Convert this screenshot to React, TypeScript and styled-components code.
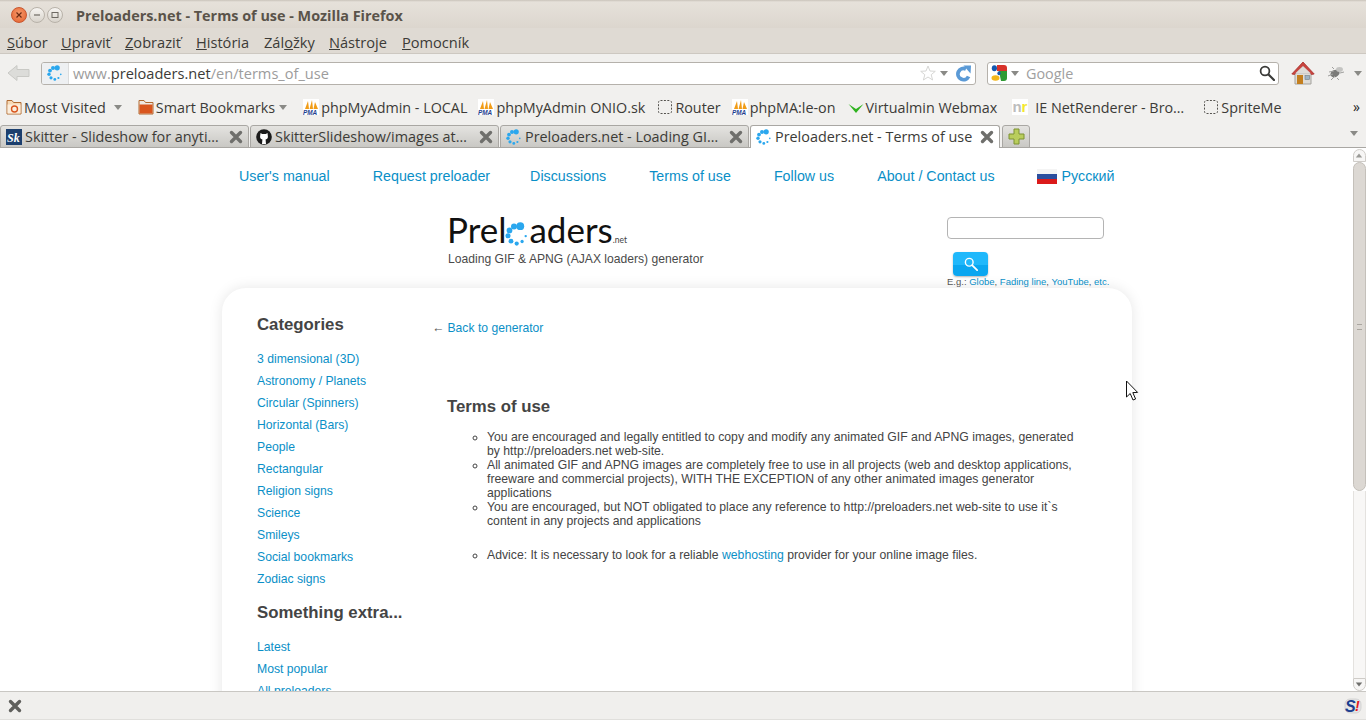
import React from 'react';
import styled, { createGlobalStyle } from 'styled-components';

const UI_FONT = '"Open Sans", "Noto Sans", sans-serif';
const PAGE_FONT = '"Liberation Sans", Arial, sans-serif';

const GlobalStyle = createGlobalStyle`
  html, body {
    margin: 0;
    padding: 0;
    overflow: hidden;
    background: #fff;
  }
  * {
    box-sizing: border-box;
  }
`;

const Window = styled.div`
  position: relative;
  display: flex;
  flex-direction: column;
  width: 1366px;
  height: 720px;
  overflow: hidden;
  font-family: ${UI_FONT};
`;

const TitleBar = styled.div`
  display: flex;
  align-items: center;
  height: 28px;
  padding: 2px 0 0 11px;
  background: linear-gradient(#c9c3ba 0, #e6e1da 2px, #dcd6ce 100%);
`;

const WindowButtons = styled.div`
  display: flex;
  gap: 2px;
  width: 65px;
`;

const WindowButton = styled.div<{ $close?: boolean }>`
  display: flex;
  align-items: center;
  justify-content: center;
  width: 16px;
  height: 16px;
  border-radius: 50%;
  border: 1px solid ${({ $close }) => ($close ? '#c9562f' : '#b8b2a9')};
  background: ${({ $close }) =>
    $close
      ? 'radial-gradient(circle at 50% 40%, #f79a6c, #e2602c)'
      : 'linear-gradient(#f7f5f2, #d8d3cb)'};
`;

const WindowTitle = styled.div`
  font-size: 14.4px;
  font-weight: 700;
  color: #5a534a;
  white-space: nowrap;
`;

const MenuBar = styled.div`
  display: flex;
  align-items: center;
  height: 26px;
  padding: 2px 0 0 7px;
  background: #dfdad3;
  border-bottom: 1px solid #cdc8c1;
  font-size: 14.6px;
  color: #3c3b37;
`;

const MenuItem = styled.span<{ $width: number }>`
  width: ${({ $width }) => $width}px;
  white-space: nowrap;
`;

const NavBar = styled.div`
  display: flex;
  align-items: center;
  height: 38px;
  padding-left: 7px;
  background: #f1f0ee;
`;

const UrlBox = styled.div`
  display: flex;
  align-items: center;
  width: 935px;
  height: 23px;
  margin-left: 10px;
  background: #fff;
  border: 1px solid #b5b1ab;
  border-radius: 3px;
  overflow: hidden;
`;

const UrlIcon = styled.div`
  display: flex;
  align-items: center;
  justify-content: center;
  width: 27px;
  height: 100%;
  background: #eef0f2;
  border-right: 1px solid #dcdcdc;
`;

const UrlText = styled.div`
  flex: 1;
  padding-left: 4px;
  font-size: 14.6px;
  color: #9c9c9c;
  white-space: nowrap;
`;

const UrlHost = styled.span`
  color: #3c3b37;
`;

const UrlActions = styled.div`
  display: flex;
  align-items: center;
  gap: 4px;
  padding-right: 3px;
`;

const ReloadWrap = styled.div`
  display: flex;
  margin-left: 3px;
`;

const SearchBox = styled.div`
  display: flex;
  align-items: center;
  width: 292px;
  height: 23px;
  margin-left: 11px;
  padding: 0 3px;
  background: #fff;
  border: 1px solid #b5b1ab;
  border-radius: 3px;
`;

const SearchPlaceholder = styled.div`
  flex: 1;
  margin-left: 7px;
  font-size: 14.4px;
  color: #a0a0a0;
`;

const NavEnd = styled.div`
  display: flex;
  align-items: center;
  margin-left: 12px;
`;

const DropArrow = styled.span<{ $color?: string; $left?: number }>`
  display: inline-block;
  width: 0;
  height: 0;
  margin-left: ${({ $left }) => $left || 0}px;
  border-left: 4px solid transparent;
  border-right: 4px solid transparent;
  border-top: 5px solid ${({ $color }) => $color || '#8a8a86'};
`;

const BookmarksBar = styled.div`
  display: flex;
  align-items: center;
  height: 30px;
  padding-left: 6px;
  background: #f1f0ee;
  font-size: 14.35px;
  color: #3c3b37;
`;

const Bookmark = styled.div<{ $left: number; $gap?: number }>`
  display: flex;
  align-items: center;
  gap: ${({ $gap }) => $gap || 2}px;
  margin-left: ${({ $left }) => $left}px;
  white-space: nowrap;
`;

const Chevron = styled.span`
  margin-left: auto;
  padding-right: 6px;
  font-size: 14px;
  line-height: 14px;
  color: #222;
`;

const TabStrip = styled.div`
  display: flex;
  align-items: flex-end;
  height: 26px;
  padding-right: 6px;
  background: #f1f0ee;
  border-bottom: 1px solid #a9a7a3;
`;

const Tab = styled.div<{ $active?: boolean; $width: number }>`
  display: flex;
  align-items: center;
  gap: 3px;
  width: ${({ $width }) => $width}px;
  height: 23px;
  margin-right: 1px;
  margin-bottom: -1px;
  padding: 0 5px ${({ $active }) => ($active ? '1px' : '0')} 5px;
  border: 1px solid #a9a7a3;
  border-bottom: ${({ $active }) => ($active ? 'none' : '1px solid #a9a7a3')};
  border-radius: 3px 3px 0 0;
  background: ${({ $active }) =>
    $active ? '#fff' : 'linear-gradient(#e4e3e0, #c9c8c4)'};
  font-size: 14.4px;
  color: #3c3b37;
`;

const TabTitle = styled.span`
  flex: 1;
  white-space: nowrap;
  overflow: hidden;
`;

const NewTab = styled(Tab)`
  justify-content: center;
  padding: 0;
  margin-left: 1px;
`;

const TabListButton = styled.div`
  margin-left: auto;
  padding: 0 2px 6px 0;
`;

const Viewport = styled.div`
  flex: 1;
  display: flex;
  min-height: 0;
`;

const Page = styled.div`
  flex: 1;
  overflow: hidden;
  font-family: ${PAGE_FONT};
  background: #fff;
`;

const Scrollbar = styled.div`
  display: flex;
  flex-direction: column;
  align-items: center;
  width: 14px;
  padding-top: 1px;
  background: #fff;
`;

const ScrollButton = styled.div<{ $up?: boolean }>`
  display: flex;
  align-items: center;
  justify-content: center;
  width: 13px;
  height: 13px;
  background: #f7f6f5;
  border: 1px solid #cfccc8;
  border-radius: ${({ $up }) => ($up ? '7px 7px 0 0' : '0 0 7px 7px')};
`;

const ScrollArrow = styled(DropArrow)<{ $up?: boolean }>`
  transform: ${({ $up }) => ($up ? 'rotate(180deg) scale(.8)' : 'scale(.8)')};
`;

const ScrollThumb = styled.div`
  display: flex;
  align-items: center;
  justify-content: center;
  width: 13px;
  height: 329px;
  background: #dcd8d3;
  border: 1px solid #c4c0ba;
  border-radius: 7px;
`;

const ScrollTrack = styled.div`
  flex: 1;
  width: 13px;
  background: #f8f7f6;
  border-left: 1px solid #e4e2df;
  border-right: 1px solid #e4e2df;
`;

const Grip = styled.div`
  width: 5px;
  height: 6px;
  border-top: 1px solid #aaa6a0;
  border-bottom: 1px solid #aaa6a0;
`;

const TopLinks = styled.nav`
  display: flex;
  align-items: center;
  height: 56px;
  padding-left: 239px;
`;

const TopLink = styled.a<{ $left: number }>`
  display: flex;
  align-items: center;
  gap: 5px;
  margin-left: ${({ $left }) => $left}px;
  font-size: 14.28px;
  color: #0a8fc7;
  white-space: nowrap;
`;

const Header = styled.header`
  display: flex;
  height: 84px;
  padding-left: 447px;
`;

const Brand = styled.div`
  width: 500px;
`;

const Logo = styled.div`
  display: flex;
  align-items: baseline;
  height: 47px;
  font-family: Lato, "Open Sans", sans-serif;
  font-size: 35px;
  line-height: 50px;
  color: #111;
`;

const LogoMark = styled.span`
  display: inline-flex;
  align-self: flex-end;
  margin: 0 0 5px -1px;
`;

const LogoNet = styled.span`
  font-size: 8.5px;
  line-height: 10px;
  color: #444;
`;

const Tagline = styled.div`
  margin: 1px 0 0 1px;
  font-size: 12.14px;
  line-height: 14px;
  color: #4a4a4a;
`;

const SearchForm = styled.div`
  width: 170px;
  padding-top: 13px;
`;

const SearchInput = styled.div`
  width: 157px;
  height: 22px;
  border: 1px solid #b4b4b4;
  border-radius: 4px;
  background: #fff;
`;

const SearchButton = styled.div`
  display: flex;
  align-items: center;
  justify-content: center;
  width: 35px;
  height: 24px;
  margin: 13px 0 0 6px;
  border-radius: 4px;
  background: linear-gradient(#20b8fb 0, #20b8fb 55%, #0aa6f0 56%, #0aa6f0 100%);
  box-shadow: 0 1px 2px rgba(0, 0, 0, 0.3);
`;

const Examples = styled.div`
  font-size: 9.5px;
  line-height: 12px;
  color: #555;
  white-space: nowrap;
`;

const ExampleLink = styled.a`
  color: #0a8fc7;
`;

const Card = styled.div`
  display: flex;
  width: 910px;
  min-height: 560px;
  margin-left: 222px;
  border-radius: 24px;
  background: #fff;
  box-shadow: 0 0 14px rgba(0, 0, 0, 0.1);
`;

const Sidebar = styled.aside`
  width: 211px;
  padding: 27px 0 0 35px;
`;

const SideHeading = styled.h3<{ $top?: number }>`
  margin: ${({ $top }) => $top || 0}px 0 13px;
  font-size: 16.8px;
  line-height: 20px;
  font-weight: 700;
  color: #444;
  white-space: nowrap;
`;

const SideLinks = styled.ul`
  margin: 0;
  padding: 0;
  list-style: none;
`;

const SideLink = styled.li`
  font-size: 12.2px;
  line-height: 22px;
  color: #0a8fc7;
`;

const Main = styled.main`
  flex: 1;
  padding-top: 33px;
`;

const BackLink = styled.div`
  margin-left: -1px;
  font-size: 12.15px;
  line-height: 14px;
  color: #0a8fc7;
`;

const BackArrow = styled.span`
  color: #555;
`;

const Article = styled.article`
  padding: 61px 0 0 14px;
`;

const ArticleTitle = styled.h2`
  margin: 0 0 12px;
  font-size: 16.8px;
  line-height: 22px;
  font-weight: 700;
  color: #444;
`;

const Terms = styled.ul<{ $top?: number }>`
  width: 635px;
  margin: ${({ $top }) => $top || 0}px 0 0;
  padding-left: 40px;
  list-style: circle;
  font-size: 12.23px;
  line-height: 14px;
  color: #444;
`;

const InlineLink = styled.a`
  color: #0a8fc7;
`;

const StatusBar = styled.div`
  display: flex;
  align-items: center;
  justify-content: space-between;
  height: 29px;
  padding: 0 4px 0 8px;
  background: #f0efed;
  border-top: 1px solid #c9c7c3;
  border-bottom: 1px solid #e0dfdc;
`;

const Cursor = styled.svg`
  position: absolute;
  left: 1125px;
  top: 380px;
`;

function Spinner({ size = 16 }: { size?: number }) {
  const dots = [
    [10.2, 2.8, 2.6],
    [6, 3, 2],
    [3, 5.6, 1.9],
    [2, 9.2, 1.7],
    [4, 12.8, 1.6],
    [7.8, 14.4, 1.4],
    [11.4, 13, 1.1],
    [13.8, 9.4, 0.8],
  ];
  return (
    <svg width={size} height={size} viewBox="0 0 16 16">
      {dots.map(([cx, cy, r]) => (
        <circle key={`${cx}-${cy}`} cx={cx} cy={cy} r={r} fill="#2aa7ee" />
      ))}
    </svg>
  );
}

function CloseIcon({ size = 14, color = '#6f6f6c' }: { size?: number; color?: string }) {
  return (
    <svg width={size} height={size} viewBox="0 0 14 14">
      <path d="M2.5 2.5 L11.5 11.5 M11.5 2.5 L2.5 11.5" stroke={color} strokeWidth="3.4" strokeLinecap="round" />
    </svg>
  );
}

function PmaIcon() {
  return (
    <svg width="16" height="16" viewBox="0 0 16 16">
      <rect width="16" height="16" fill="#fff" />
      <path d="M2 10 L5 2 L6 10 Z M6.5 10 L9 1 L10 10 Z M10.5 10 L12 3 L15 10 Z" fill="#f19c16" />
      <text x="0" y="15.5" fontFamily="Liberation Sans" fontSize="6.4" fontWeight="700" fontStyle="italic" fill="#1f3f8f">PMA</text>
    </svg>
  );
}

function EmptyFavicon() {
  return (
    <svg width="16" height="16" viewBox="0 0 16 16">
      <rect x="1.5" y="1.5" width="13" height="13" rx="2" fill="none" stroke="#55534f" strokeDasharray="2 1.4" />
    </svg>
  );
}

function FolderIcon({ star }: { star?: boolean }) {
  return (
    <svg width="16" height="16" viewBox="0 0 16 16">
      <path d="M1 1.5 H6 L7.5 3.5 H15 V15 H1 Z" fill={star ? '#f7d9b5' : '#efe9e2'} stroke="#b06a30" />
      <rect x="1.5" y="5.5" width="13" height="9" fill={star ? '#fbeedd' : '#d9561e'} />
      {star && <circle cx="8.5" cy="10" r="3" fill="none" stroke="#d9561e" strokeWidth="1.4" />}
    </svg>
  );
}

function BackIcon() {
  return (
    <svg width="24" height="20" viewBox="0 0 24 20">
      <path d="M1 10 L10 2.5 V6.5 H22 V13.5 H10 V17.5 Z" fill="#dcdcd9" stroke="#c9c9c5" />
    </svg>
  );
}

function StarIcon() {
  return (
    <svg width="16" height="16" viewBox="0 0 16 16">
      <path d="M8 1 L10 6 L15.3 6.3 L11.2 9.7 L12.6 15 L8 12 L3.4 15 L4.8 9.7 L0.7 6.3 L6 6 Z" fill="#fff" stroke="#d6d6d4" />
    </svg>
  );
}

function ReloadIcon() {
  return (
    <svg width="17" height="17" viewBox="0 0 17 17">
      <path d="M13.6 11.5 A5.6 5.6 0 1 1 11 4" fill="none" stroke="#5b9ad6" strokeWidth="3.8" />
      <path d="M8.5 0.5 L16 0.5 L15.5 8.5 Z" fill="#5b9ad6" />
    </svg>
  );
}

function GoogleIcon() {
  return (
    <svg width="16" height="16" viewBox="0 0 16 16">
      <rect x="0" y="0" width="16" height="16" rx="2" fill="#fff" />
      <path d="M6 0 H13 Q16 0 16 3 V6 H6 Z" fill="#d8322a" />
      <path d="M8 6 H16 V13 Q16 16 13 16 H10 Z" fill="#2f9a33" />
      <ellipse cx="3.4" cy="3.2" rx="2.6" ry="3" fill="#1558b0" />
      <ellipse cx="8" cy="8.2" rx="1.6" ry="2" fill="#1558b0" />
      <ellipse cx="4.5" cy="13" rx="4" ry="2.8" fill="#f3b61b" />
    </svg>
  );
}

function MagnifierIcon({ color = '#3a3a38', size = 16, width = 2.2 }: { color?: string; size?: number; width?: number }) {
  return (
    <svg width={size} height={size} viewBox="0 0 16 16">
      <circle cx="6" cy="6" r="4.4" fill="none" stroke={color} strokeWidth={width * 0.8} />
      <path d="M9.5 9.5 L15 15" stroke={color} strokeWidth={width} strokeLinecap="round" />
    </svg>
  );
}

function HomeIcon() {
  return (
    <svg width="24" height="24" viewBox="0 0 24 24">
      <path d="M4 12 H20 V23 H4 Z" fill="#dedcd8" stroke="#a4a29d" />
      <path d="M0.8 13 L12 1 L23.2 13 L20.5 13.5 L12 5 L3.5 13.5 Z" fill="#c8453f" stroke="#a8302c" strokeWidth="0.8" />
      <path d="M12 5 L20 12.5 H4 Z" fill="#dedcd8" />
      <rect x="6" y="14" width="6" height="9" fill="#c47f1e" />
      <rect x="14" y="14.5" width="4.5" height="4" fill="#9db3c4" stroke="#6e7d88" strokeWidth="0.6" />
    </svg>
  );
}

function BugIcon() {
  return (
    <svg width="18" height="16" viewBox="0 0 18 16">
      <ellipse cx="8" cy="8.5" rx="4.8" ry="3.6" fill="#7a7a78" transform="rotate(-25 8 8.5)" />
      <ellipse cx="12.5" cy="4.5" rx="3.4" ry="2.4" fill="#c4c4c2" />
      <path d="M1 11 L6 9 M4 15 L8 11 M10 13 L12 15 M2 7 L7 6 M13 8 L17 7 M7 4 L5 2" stroke="#a0a09e" strokeWidth="1" />
    </svg>
  );
}

function PlusIcon() {
  return (
    <svg width="17" height="17" viewBox="0 0 17 17">
      <path d="M6 1 H11 V6 H16 V11 H11 V16 H6 V11 H1 V6 H6 Z" fill="#b9cd5c" stroke="#7d9232" />
    </svg>
  );
}

function SkitterIcon() {
  return (
    <svg width="16" height="16" viewBox="0 0 16 16">
      <rect width="16" height="16" fill="#1c3f6e" />
      <text x="1" y="12.5" fontFamily="Liberation Serif" fontSize="12" fontWeight="700" fontStyle="italic" fill="#fff">Sk</text>
    </svg>
  );
}

function GithubIcon() {
  return (
    <svg width="16" height="16" viewBox="0 0 16 16">
      <circle cx="8" cy="8" r="7.8" fill="#1b1b1b" />
      <path d="M4.5 4 L6.2 5 H9.8 L11.5 4 L11.8 6.5 Q12.5 10 9.6 10.5 L10 15 H6 L6.4 10.5 Q3.5 10 4.2 6.5 Z" fill="#fff" />
    </svg>
  );
}

function CheckIcon() {
  return (
    <svg width="16" height="16" viewBox="0 0 16 16">
      <path d="M0.5 5 L8 10 L15.5 5 L8 14 Z" fill="#2fb31f" />
    </svg>
  );
}

function NrIcon() {
  return (
    <svg width="16" height="16" viewBox="0 0 16 16">
      <rect width="16" height="16" fill="#fff" />
      <text x="0.5" y="13" fontFamily="Liberation Sans" fontSize="15" fontWeight="700" fill="#bdbdbd">n</text>
      <text x="9.6" y="13" fontFamily="Liberation Sans" fontSize="15" fontWeight="700" fill="#f4e82c">r</text>
    </svg>
  );
}

function FlagIcon() {
  return (
    <svg width="20" height="15" viewBox="0 0 20 15">
      <rect width="20" height="5" fill="#f4f4f4" />
      <rect y="5" width="20" height="5" fill="#2c4f9e" />
      <rect y="10" width="20" height="5" fill="#db1a1a" />
    </svg>
  );
}

function SpeedyIcon() {
  return (
    <svg width="18" height="18" viewBox="0 0 18 18">
      <rect x="1" y="2" width="16" height="14" rx="5" fill="#e6e6e6" stroke="#c4c4c4" strokeWidth="0.6" />
      <text x="1" y="15" fontFamily="Liberation Sans" fontSize="16" fontWeight="700" fontStyle="italic" fill="#1c3f8f">S</text>
      <text x="11" y="14" fontFamily="Liberation Sans" fontSize="14" fontWeight="700" fontStyle="italic" fill="#e31b23">!</text>
    </svg>
  );
}

const MENU: [string, string, string, number][] = [
  ['', 'S', 'úbor', 54],
  ['', 'U', 'praviť', 64],
  ['', 'Z', 'obraziť', 71],
  ['', 'H', 'istória', 68],
  ['Zál', 'o', 'žky', 65],
  ['', 'N', 'ástroje', 73],
  ['', 'P', 'omocník', 70],
];

const TABS = [
  { icon: <SkitterIcon />, title: 'Skitter - Slideshow for anyti…', width: 249 },
  { icon: <GithubIcon />, title: 'SkitterSlideshow/images at…', width: 249 },
  { icon: <Spinner />, title: 'Preloaders.net - Loading GI…', width: 249 },
  { icon: <Spinner />, title: 'Preloaders.net - Terms of use', width: 250, active: true },
];

const CATEGORIES = [
  '3 dimensional (3D)',
  'Astronomy / Planets',
  'Circular (Spinners)',
  'Horizontal (Bars)',
  'People',
  'Rectangular',
  'Religion signs',
  'Science',
  'Smileys',
  'Social bookmarks',
  'Zodiac signs',
];

const EXTRAS = ['Latest', 'Most popular', 'All preloaders'];

export default function App() {
  return (
    <Window>
      <GlobalStyle />
      <TitleBar>
        <WindowButtons>
          <WindowButton $close>
            <svg width="8" height="8" viewBox="0 0 8 8">
              <path d="M1.5 1.5 L6.5 6.5 M6.5 1.5 L1.5 6.5" stroke="#6b2a12" strokeWidth="1.2" />
            </svg>
          </WindowButton>
          <WindowButton>
            <svg width="8" height="8" viewBox="0 0 8 8">
              <path d="M1 4 H7" stroke="#6e6a63" strokeWidth="1.2" />
            </svg>
          </WindowButton>
          <WindowButton>
            <svg width="8" height="8" viewBox="0 0 8 8">
              <rect x="1" y="1.5" width="6" height="5" fill="none" stroke="#6e6a63" />
            </svg>
          </WindowButton>
        </WindowButtons>
        <WindowTitle>Preloaders.net - Terms of use - Mozilla Firefox</WindowTitle>
      </TitleBar>

      <MenuBar>
        {MENU.map(([before, key, after, width]) => (
          <MenuItem key={key + after} $width={width}>
            {before}
            <u>{key}</u>
            {after}
          </MenuItem>
        ))}
      </MenuBar>

      <NavBar>
        <BackIcon />
        <UrlBox>
          <UrlIcon>
            <Spinner />
          </UrlIcon>
          <UrlText>
            www.<UrlHost>preloaders.net</UrlHost>/en/terms_of_use
          </UrlText>
          <UrlActions>
            <StarIcon />
            <DropArrow />
            <ReloadWrap>
              <ReloadIcon />
            </ReloadWrap>
          </UrlActions>
        </UrlBox>
        <SearchBox>
          <GoogleIcon />
          <DropArrow $left={4} />
          <SearchPlaceholder>Google</SearchPlaceholder>
          <MagnifierIcon />
        </SearchBox>
        <NavEnd>
          <HomeIcon />
        </NavEnd>
        <NavEnd>
          <BugIcon />
          <DropArrow $left={9} />
        </NavEnd>
      </NavBar>

      <BookmarksBar>
        <Bookmark $left={0}>
          <FolderIcon star />
          Most Visited
          <DropArrow $left={6} />
        </Bookmark>
        <Bookmark $left={16}>
          <FolderIcon />
          Smart Bookmarks
          <DropArrow $left={2} />
        </Bookmark>
        <Bookmark $left={16}>
          <PmaIcon />
          phpMyAdmin - LOCAL
        </Bookmark>
        <Bookmark $left={11}>
          <PmaIcon />
          phpMyAdmin ONIO.sk
        </Bookmark>
        <Bookmark $left={12}>
          <EmptyFavicon />
          Router
        </Bookmark>
        <Bookmark $left={11}>
          <PmaIcon />
          phpMA:le-on
        </Bookmark>
        <Bookmark $left={12}>
          <CheckIcon />
          Virtualmin Webmax
        </Bookmark>
        <Bookmark $left={15} $gap={7}>
          <NrIcon />
          IE NetRenderer - Bro…
        </Bookmark>
        <Bookmark $left={19}>
          <EmptyFavicon />
          SpriteMe
        </Bookmark>
        <Chevron>»</Chevron>
      </BookmarksBar>

      <TabStrip>
        {TABS.map((tab) => (
          <Tab key={tab.title} $width={tab.width} $active={tab.active}>
            {tab.icon}
            <TabTitle>{tab.title}</TabTitle>
            <CloseIcon />
          </Tab>
        ))}
        <NewTab $width={28}>
          <PlusIcon />
        </NewTab>
        <TabListButton>
          <DropArrow />
        </TabListButton>
      </TabStrip>

      <Viewport>
        <Page>
          <TopLinks>
            <TopLink $left={0}>User's manual</TopLink>
            <TopLink $left={43}>Request preloader</TopLink>
            <TopLink $left={40}>Discussions</TopLink>
            <TopLink $left={43}>Terms of use</TopLink>
            <TopLink $left={43}>Follow us</TopLink>
            <TopLink $left={43}>About / Contact us</TopLink>
            <TopLink $left={42}>
              <FlagIcon />
              Русский
            </TopLink>
          </TopLinks>

          <Header>
            <Brand>
              <Logo>
                Prel
                <LogoMark>
                  <Spinner size={24} />
                </LogoMark>
                aders
                <LogoNet>.net</LogoNet>
              </Logo>
              <Tagline>Loading GIF &amp; APNG (AJAX loaders) generator</Tagline>
            </Brand>
            <SearchForm>
              <SearchInput />
              <SearchButton>
                <MagnifierIcon color="#fff" size={14} width={2} />
              </SearchButton>
              <Examples>
                E.g.: <ExampleLink>Globe</ExampleLink>, <ExampleLink>Fading line</ExampleLink>,{' '}
                <ExampleLink>YouTube</ExampleLink>, <ExampleLink>etc.</ExampleLink>
              </Examples>
            </SearchForm>
          </Header>

          <Card>
            <Sidebar>
              <SideHeading>Categories</SideHeading>
              <SideLinks>
                {CATEGORIES.map((name) => (
                  <SideLink key={name}>{name}</SideLink>
                ))}
              </SideLinks>
              <SideHeading $top={13}>Something extra...</SideHeading>
              <SideLinks>
                {EXTRAS.map((name) => (
                  <SideLink key={name}>{name}</SideLink>
                ))}
              </SideLinks>
            </Sidebar>
            <Main>
              <BackLink>
                <BackArrow>←</BackArrow> Back to generator
              </BackLink>
              <Article>
                <ArticleTitle>Terms of use</ArticleTitle>
                <Terms>
                  <li>
                    You are encouraged and legally entitled to copy and modify any animated GIF and APNG images, generated
                    by http://preloaders.net web-site.
                  </li>
                  <li>
                    All animated GIF and APNG images are completely free to use in all projects (web and desktop applications,
                    freeware and commercial projects), WITH THE EXCEPTION of any other animated images generator
                    applications
                  </li>
                  <li>
                    You are encouraged, but NOT obligated to place any reference to http://preloaders.net web-site to use it`s
                    content in any projects and applications
                  </li>
                </Terms>
                <Terms $top={20}>
                  <li>
                    Advice: It is necessary to look for a reliable <InlineLink>webhosting</InlineLink> provider for your online
                    image files.
                  </li>
                </Terms>
              </Article>
            </Main>
          </Card>
        </Page>
        <Scrollbar>
          <ScrollButton $up>
            <ScrollArrow $up $color="#9a9a96" />
          </ScrollButton>
          <ScrollThumb>
            <Grip />
          </ScrollThumb>
          <ScrollTrack />
          <ScrollButton>
            <ScrollArrow $color="#6f6f6c" />
          </ScrollButton>
        </Scrollbar>
      </Viewport>

      <StatusBar>
        <CloseIcon size={14} color="#5f5f5c" />
        <SpeedyIcon />
      </StatusBar>

      <Cursor width="14" height="22" viewBox="0 0 14 22">
        <path d="M1.5 1 V17 L5.2 13.5 L8 20 L10.6 19 L7.8 12.6 L12.6 12.4 Z" fill="#fff" stroke="#111" strokeWidth="1" />
      </Cursor>
    </Window>
  );
}
